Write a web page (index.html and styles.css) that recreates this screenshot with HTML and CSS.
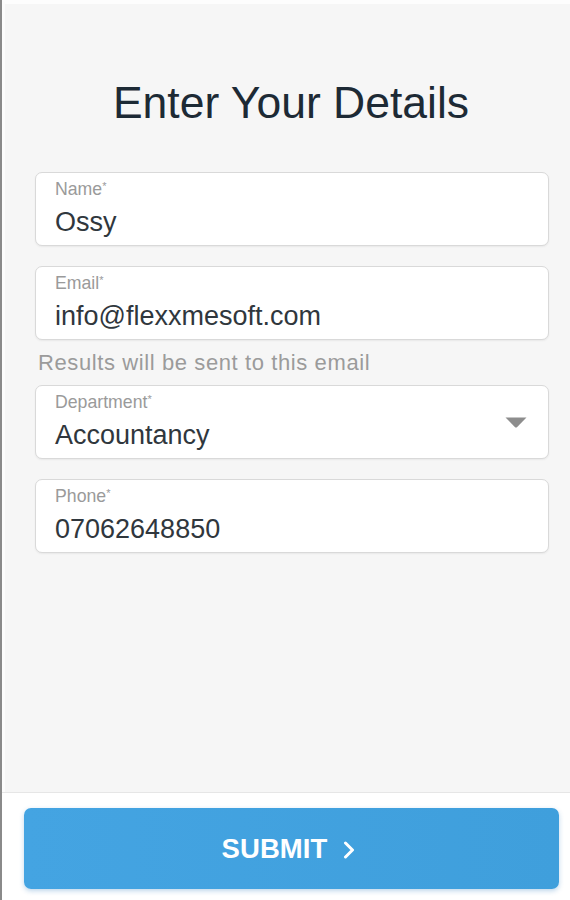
FILE: index.html
```html
<!DOCTYPE html>
<html lang="en">
<head>
<meta charset="utf-8">
<title>Enter Your Details</title>
<link rel="stylesheet" href="styles.css">
</head>
<body>
<div class="app">
  <main class="main">
    <h1 class="title">Enter Your Details</h1>
    <form class="form">
      <div class="field">
        <span class="label">Name<sup>*</sup></span>
        <span class="value">Ossy</span>
      </div>
      <div class="field">
        <span class="label">Email<sup>*</sup></span>
        <span class="value">info@flexxmesoft.com</span>
      </div>
      <p class="helper">Results will be sent to this email</p>
      <div class="field select">
        <div class="select-text">
          <span class="label">Department<sup>*</sup></span>
          <span class="value">Accountancy</span>
        </div>
        <svg class="caret" width="22" height="11" viewBox="0 0 22 11"><path d="M0.5 0.5 H21.5 L12.2 10 Q11 11 9.8 10 Z" fill="#8d8d8d"/></svg>
      </div>
      <div class="field">
        <span class="label">Phone<sup>*</sup></span>
        <span class="value">07062648850</span>
      </div>
    </form>
  </main>
  <footer class="footer">
    <button class="submit" type="button">SUBMIT
      <svg class="chev" width="12" height="18" viewBox="0 0 12 18"><path d="M2.5 2 L9.5 9 L2.5 16" fill="none" stroke="#fff" stroke-width="3" stroke-linecap="round" stroke-linejoin="round"/></svg>
    </button>
  </footer>
</div>
</body>
</html>
```
FILE: styles.css
```css
* { box-sizing: border-box; }
html, body { margin: 0; padding: 0; }
body {
  font-family: "Liberation Sans", Arial, sans-serif;
  background: #ffffff;
}
.app {
  min-height: 900px;
  display: flex;
  flex-direction: column;
  border-left: 2px solid #8a8a8a;
}
.main {
  flex: 1;
  background: #f6f6f6;
  border-left: 3px solid #fcfcfc;
  border-top: 4px solid #fdfdfd;
  padding: 75px 21px 0 30px;
}
.title {
  margin: 0;
  text-align: center;
  font-weight: 400;
  font-size: 44.5px;
  line-height: 48px;
  color: #1d2a35;
  padding-right: 2px;
}
.form {
  margin-top: 45px;
  display: flex;
  flex-direction: column;
}
.field {
  height: 74px;
  background: #ffffff;
  border: 1px solid #d9d9d9;
  border-radius: 7px;
  padding: 6px 19px 0;
  display: flex;
  flex-direction: column;
  box-shadow: 0 1px 2px rgba(0,0,0,0.06);
}
.field + .field { margin-top: 20px; }
.label {
  font-size: 17.7px;
  line-height: 20px;
  color: #9a9a9a;
}
.label sup {
  font-size: 11px;
  vertical-align: top;
  line-height: 14px;
}
.value {
  margin-top: 8px;
  font-size: 27px;
  line-height: 30px;
  color: #30373d;
}
.helper {
  margin: 0;
  padding: 10px 0 10px 3px;
  font-size: 22px;
  line-height: 25px;
  color: #9b9b9b;
  letter-spacing: 0.6px;
}
.select {
  flex-direction: row;
  align-items: center;
  padding-right: 21px;
}
.select-text {
  flex: 1;
  align-self: stretch;
  display: flex;
  flex-direction: column;
}
.caret { margin-top: -6px; }
.footer {
  background: #ffffff;
  border-top: 1px solid #e6e6e6;
  padding: 15px 11px 11px 22px;
}
.submit {
  width: 100%;
  height: 81px;
  border: none;
  border-radius: 7px;
  background: linear-gradient(90deg, #44a4e2, #3f9fdc);
  box-shadow: 0 2px 5px rgba(40,120,190,0.3);
  color: #ffffff;
  font-family: "Liberation Sans", Arial, sans-serif;
  font-weight: 700;
  font-size: 27.5px;
  letter-spacing: 0.1px;
  display: flex;
  align-items: center;
  justify-content: center;
  gap: 15px;
  padding: 0 7px 0 0;
}
.chev { margin-top: 2px; }
```
